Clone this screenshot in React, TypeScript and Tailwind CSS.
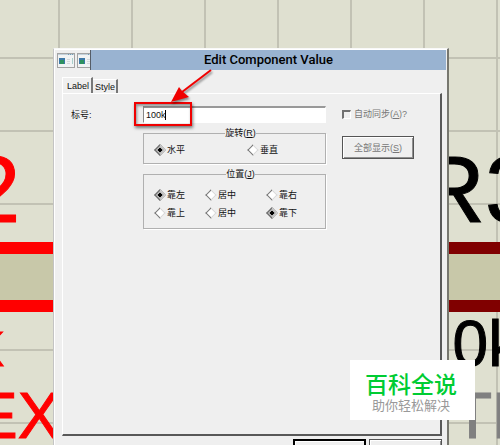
import type { ReactNode } from "react";

type Choice = { label: string; checked?: boolean };

const ROTATION: Choice[] = [{ label: "水平", checked: true }, { label: "垂直" }];

const HORIZONTAL: Choice[] = [{ label: "靠左", checked: true }, { label: "居中" }, { label: "靠右" }];
const VERTICAL: Choice[] = [{ label: "靠上" }, { label: "居中" }, { label: "靠下", checked: true }];

function Radio({ name, label, checked }: Choice & { name: string }) {
  return (
    <label className="flex items-center gap-[3px]">
      <input
        type="radio"
        name={name}
        defaultChecked={checked}
        className="size-2 shrink-0 rotate-45 appearance-none border border-t-[#d8d8d8] border-r-[#d8d8d8] border-b-[#777] border-l-[#777] bg-white checked:bg-black checked:shadow-[inset_0_0_0_1px_white]"
      />
      <span>{label}</span>
    </label>
  );
}

function Group({ title, hotkey, children }: { title: string; hotkey: string; children: ReactNode }) {
  return (
    <fieldset className="border border-[#b0b0b0] pl-3 shadow-[1px_1px_0_white]">
      <legend className="mx-auto leading-[10px]">
        {title}(<u>{hotkey}</u>)
      </legend>
      {children}
    </fieldset>
  );
}

function WindowIcon() {
  return (
    <svg width="18" height="15" viewBox="0 0 18 15" className="shrink-0">
      <rect x="0.5" y="0.5" width="17" height="14" fill="#f1f3f4" stroke="#a3a3a3" />
      <path d="M1 1.500H17" stroke="#c3d0da" />
      <path d="M11 1.500H16" stroke="#6e9cb5" strokeDasharray="1 1" />
      <rect x="2" y="5" width="6" height="6" fill="#3c78a8" />
      <rect x="3" y="7" width="4" height="4" fill="#2f9160" />
      <path d="M10 6.500H13M10 8.500H13M10 10.500H13" stroke="#d4d9dc" />
      <path d="M15.500 5V11" stroke="#a9d0cc" />
    </svg>
  );
}

// Resistor as drawn on the schematic: reference, body, value and placeholder text.
function Resistor({ name, tone }: { name: string; tone: "selected" | "normal" }) {
  const selected = tone === "selected";
  return (
    <div
      className={
        selected
          ? "absolute top-0 -left-[100px] h-full w-[200px] text-[#ff0000]"
          : "absolute top-0 left-[417px] h-full w-[200px] text-black"
      }
    >
      <div className="absolute top-[138px] text-[94px] leading-[104px] [-webkit-text-stroke:1px_currentColor]">{name}</div>
      <div
        className={
          selected
            ? "absolute top-[242px] h-[70px] w-full border-y-12 border-[#ff0000] bg-[#c8c8a9]"
            : "absolute top-[242px] h-[70px] w-full border-y-12 border-[#800000] bg-[#c8c8a9]"
        }
      />
      <div className="absolute top-[308px] text-[64px] leading-[72px] [-webkit-text-stroke:1px_currentColor]">10k</div>
      <div
        className={
          selected
            ? "absolute top-[380px] left-9 text-[64px] leading-[72px] [-webkit-text-stroke:1px_currentColor]"
            : "absolute top-[380px] left-9 text-[64px] leading-[72px] text-[#808080] [-webkit-text-stroke:1px_currentColor]"
        }
      >
        TEXT
      </div>
    </div>
  );
}

function Schematic() {
  return (
    <div className="absolute inset-0 overflow-hidden bg-[#dfe0d0] bg-[linear-gradient(to_right,#c2c2b4_2px,transparent_2px),linear-gradient(to_bottom,#c2c2b4_2px,transparent_2px)] bg-size-[73px_73px] bg-position-[58px_57px]">
      <Resistor name="R2" tone="selected" />
      <Resistor name="R3" tone="normal" />
    </div>
  );
}

function Callout() {
  return (
    <>
      <div className="pointer-events-none absolute -top-1 -left-[9px] h-6 w-[58px] border-2 border-[#f00000] shadow-[1px_2px_3px_rgba(0,0,0,0.5),inset_1px_2px_3px_rgba(0,0,0,0.4)]" />
      <svg
        width="56"
        height="44"
        viewBox="0 0 56 44"
        className="pointer-events-none absolute -top-10 left-5 drop-shadow-[1px_2px_1px_rgba(0,0,0,0.45)]"
      >
        <path d="M48 4L19 26" stroke="#f00000" strokeWidth="2" />
        <path d="M8 36L16 21L19 25L26 31Z" fill="#f00000" />
      </svg>
    </>
  );
}

function EditDialog() {
  return (
    <section className="relative mr-[51px] mt-12 -mb-[17px] ml-[53px] flex flex-1 flex-col border border-t-[#f8f8f8] border-r-2 border-r-[#77776f] border-l-[#c4c4c4] bg-[#efefef] shadow-[inset_1px_1px_0_white]">
      <header className="mt-px mr-px ml-[3px] flex h-5 items-center">
        <WindowIcon />
        <div className="ml-[2px] w-[13px] shrink-0 overflow-hidden">
          <WindowIcon />
        </div>
        <h1 className="flex h-5 flex-1 items-center justify-center border-l border-[#555d68] bg-[#99b3d1] font-[Roboto,sans-serif] text-[13px] font-medium text-black">
          Edit Component Value
        </h1>
      </header>

      <div role="tablist" className="mt-[7px] ml-2 flex items-end">
        <button
          role="tab"
          aria-selected="true"
          className="h-4 border-t border-r-2 border-l border-t-white border-r-[#777] border-l-white pr-[2px] pl-1 text-[9px] leading-3"
        >
          Label
        </button>
        <button
          role="tab"
          aria-selected="false"
          className="h-[14px] border-t border-r-2 border-t-white border-r-[#777] pr-px pl-[2px] text-[9px] leading-3"
        >
          Style
        </button>
      </div>

      <form className="mr-[5px] ml-2 flex flex-1 items-start border border-t-white border-r-2 border-r-[#585858] border-b-2 border-b-[#585858] border-l-white pt-3 pr-[26px] pl-2">
        <label htmlFor="value" className="w-[72px] shrink-0 pt-[3px]">
          标号:
        </label>
        <div className="flex flex-1 flex-col gap-[5px]">
          <div className="relative">
            <input
              id="value"
              defaultValue="100k"
              className="block h-[17px] w-full border border-t-2 border-t-[#999] border-r-white border-b-white border-l-[#888] bg-white pl-[2px] text-[9px] outline-none"
            />
            <span className="absolute top-1 left-[22px] h-[10px] w-px bg-black" />
            <Callout />
          </div>
          <Group title="旋转" hotkey="R">
            <div className="grid grid-cols-[93px_1fr] pt-[6px] pb-[7px]">
              {ROTATION.map((choice) => (
                <Radio key={choice.label} name="rotation" {...choice} />
              ))}
            </div>
          </Group>
          <Group title="位置" hotkey="J">
            <div className="grid grid-cols-[51px_61px_1fr] pt-[10px] pb-[6px]">
              {HORIZONTAL.map((choice, i) => (
                <Radio key={i} name="horizontal" {...choice} />
              ))}
            </div>
            <div className="grid grid-cols-[51px_61px_1fr] pb-[9px]">
              {VERTICAL.map((choice, i) => (
                <Radio key={i} name="vertical" {...choice} />
              ))}
            </div>
          </Group>
        </div>
        <div className="ml-4 w-[72px] shrink-0 text-[#777]">
          <label className="flex items-center gap-[3px] pt-[2px] whitespace-nowrap">
            <input
              type="checkbox"
              className="size-[9px] shrink-0 appearance-none border border-t-2 border-l-2 border-t-[#707070] border-r-white border-b-white border-l-[#707070]"
            />
            <span>
              自动同步(<u>A</u>)?
            </span>
          </label>
          <button
            type="button"
            className="mt-4 h-[23px] w-full border border-[#555] shadow-[inset_1px_1px_0_white,inset_-1px_-1px_0_#909090]"
          >
            全部显示(<u>S</u>)
          </button>
        </div>
      </form>

      <footer className="mt-[3px] mr-[5px] flex justify-end gap-[3px]">
        <button aria-label="OK" className="h-[22px] w-[73px] border-2 border-black shadow-[inset_1px_1px_0_white]" />
        <button aria-label="Cancel" className="h-[22px] w-[73px] border border-[#555] shadow-[inset_1px_1px_0_white,inset_-1px_-1px_0_#909090]" />
      </footer>
    </section>
  );
}

export default function App() {
  return (
    <main className="relative flex h-screen flex-col overflow-hidden font-['Liberation_Sans','Noto_Sans_CJK_SC',sans-serif] text-[9px] leading-3 text-[#111]">
      <Schematic />
      <EditDialog />
      <aside className="absolute right-[25px] bottom-[25px] flex h-[60px] w-[125px] flex-col items-center bg-white pt-3 pr-[3px]">
        <strong className="text-[23px] leading-[26px] font-medium text-[#00cc33]">百科全说</strong>
        <span className="text-[13px] leading-4 text-[#999]">助你轻松解决</span>
      </aside>
    </main>
  );
}
